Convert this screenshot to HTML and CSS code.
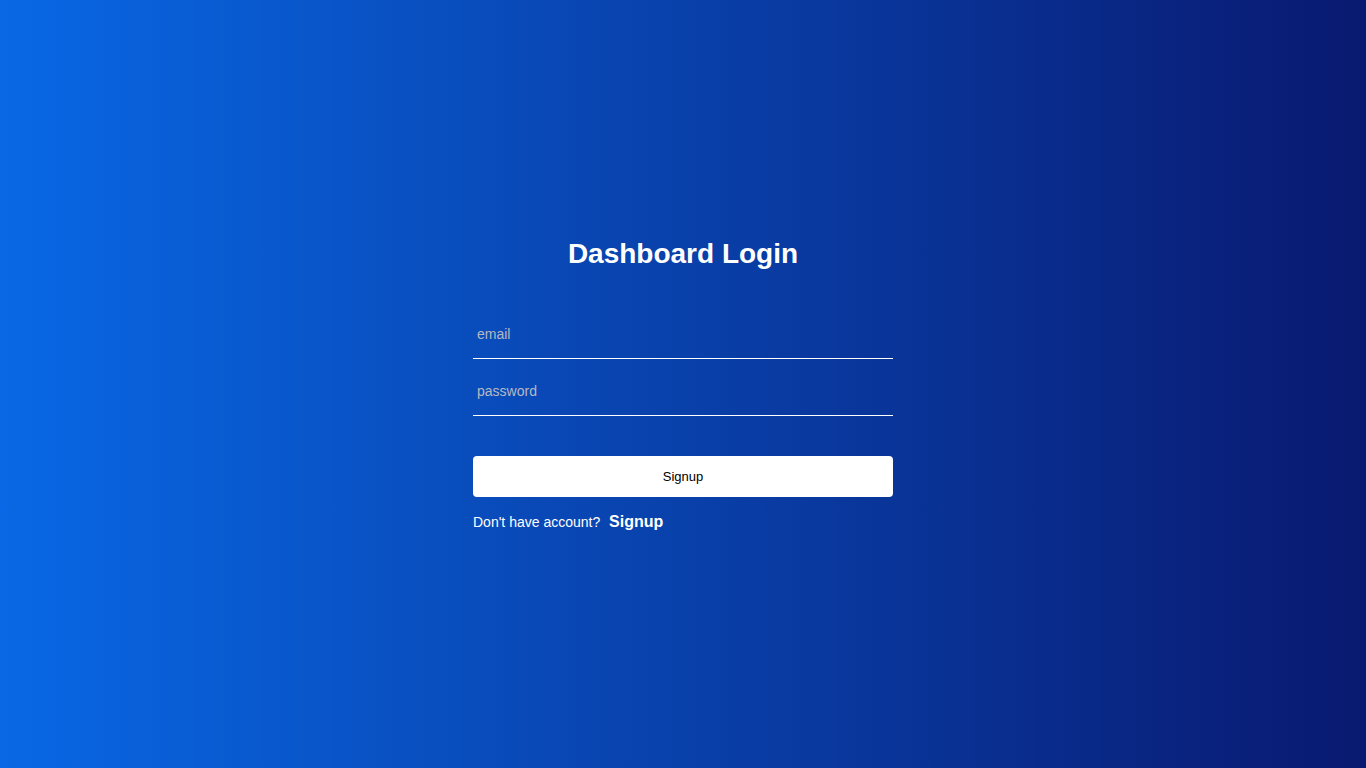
FILE: index.html
```html
<!DOCTYPE html>
<html lang="en">
<head>
<meta charset="utf-8">
<title>Dashboard Login</title>
<link rel="stylesheet" href="styles.css">
</head>
<body>
<main class="page">
  <form class="login">
    <h1 class="title">Dashboard Login</h1>
    <input class="field" type="email" placeholder="email">
    <input class="field" type="password" placeholder="password">
    <button class="btn" type="button">Signup</button>
    <p class="alt">Don't have account? <a class="alt-link" href="#">Signup</a></p>
  </form>
</main>
</body>
</html>
```

FILE: styles.css
```css
* { box-sizing: border-box; }
html, body { margin: 0; height: 100%; }
body {
  font-family: "Liberation Sans", Arial, sans-serif;
  background: linear-gradient(to right, #0968e5, #091970);
  color: #fff;
}
.page {
  min-height: 100vh;
  display: flex;
  align-items: center;
  justify-content: center;
}
.login {
  width: 420px;
  display: flex;
  flex-direction: column;
}
.title {
  margin: 0 0 48px;
  font-size: 28px;
  line-height: 32px;
  font-weight: bold;
  text-align: center;
}
.field {
  height: 41px;
  margin: 0 0 16px;
  padding: 0 4px 8px;
  border: none;
  border-bottom: 1px solid #fff;
  background: transparent;
  color: #fff;
  font-family: inherit;
  font-size: 14px;
  outline: none;
}
.field::placeholder { color: #b5b9c3; }
.btn {
  margin-top: 24px;
  height: 41px;
  border: none;
  border-radius: 4px;
  background: #fff;
  color: #000;
  font-family: inherit;
  font-size: 13px;
  cursor: pointer;
}
.alt {
  margin: 16px 0 0;
  font-size: 14px;
  line-height: 18px;
}
.alt-link {
  margin-left: 5px;
  color: #fff;
  font-weight: bold;
  font-size: 16px;
  text-decoration: none;
}
```
